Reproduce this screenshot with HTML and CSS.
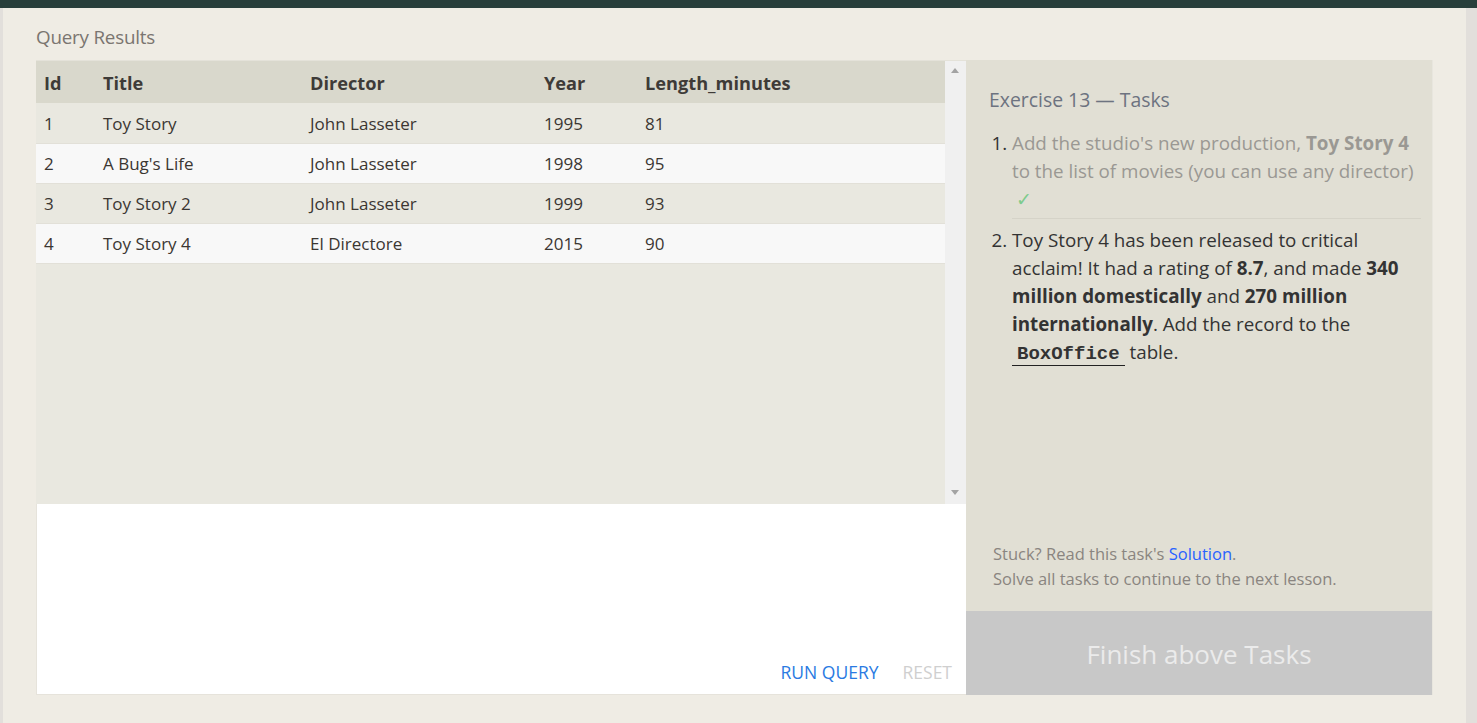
FILE: index.html
```html
<!DOCTYPE html>
<html>
<head>
<meta charset="utf-8">
<link rel="stylesheet" href="styles.css">
</head>
<body>
<div class="topbar"></div>
<div class="frame">
  <div class="main">
    <div class="section-title">Query Results</div>
    <div class="workspace">
      <div class="left">
        <div class="results">
          <div class="table-wrap">
            <table class="data">
              <colgroup>
                <col class="c-id"><col class="c-title"><col class="c-dir"><col class="c-year"><col>
              </colgroup>
              <thead>
                <tr><th>Id</th><th>Title</th><th>Director</th><th>Year</th><th>Length_minutes</th></tr>
              </thead>
              <tbody>
                <tr><td>1</td><td>Toy Story</td><td>John Lasseter</td><td>1995</td><td>81</td></tr>
                <tr><td>2</td><td>A Bug's Life</td><td>John Lasseter</td><td>1998</td><td>95</td></tr>
                <tr><td>3</td><td>Toy Story 2</td><td>John Lasseter</td><td>1999</td><td>93</td></tr>
                <tr><td>4</td><td>Toy Story 4</td><td>El Directore</td><td>2015</td><td>90</td></tr>
              </tbody>
            </table>
          </div>
          <div class="scrollbar">
            <span class="arrow up"></span>
            <span class="arrow down"></span>
          </div>
        </div>
        <div class="editor">
          <div class="actions">
            <span class="run">RUN QUERY</span>
            <span class="reset">RESET</span>
          </div>
        </div>
      </div>
      <div class="right">
        <div class="tasks">
          <div class="tasks-title">Exercise 13 — Tasks</div>
          <ol class="task-list">
            <li class="done"><span class="t">Add the studio's new production, <b>Toy Story 4</b> to the list of movies (you can use any director)</span> <span class="check">✓</span></li>
            <li>Toy Story 4 has been released to critical acclaim! It had a rating of <b>8.7</b>, and made <b>340 million domestically</b> and <b>270 million internationally</b>. Add the record to the <code>BoxOffice</code> table.</li>
          </ol>
          <div class="hint">
            <div>Stuck? Read this task's <a class="link">Solution</a>.</div>
            <div>Solve all tasks to continue to the next lesson.</div>
          </div>
        </div>
        <div class="finish">Finish above Tasks</div>
      </div>
    </div>
  </div>
</div>
</body>
</html>
```
FILE: styles.css
```css
html, body {
  margin: 0;
  padding: 0;
}
body {
  background: #e2dfdb;
  font-family: "Open Sans", "Noto Sans", sans-serif;
  width: 1477px;
  height: 723px;
  overflow: hidden;
}
.topbar {
  height: 8px;
  background: #283f3b;
}
.frame {
  padding: 0 11px 0 3px;
  height: 715px;
}
.main {
  background: #efece4;
  height: 715px;
  padding: 0 33px;
  box-sizing: border-box;
}
.section-title {
  padding-top: 17px;
  height: 35px;
  font-size: 18.8px;
  line-height: 24px;
  color: #7a7570;
  letter-spacing: -0.2px;
}
.workspace {
  display: flex;
  height: 635px;
}
.left {
  width: 930px;
  display: flex;
  flex-direction: column;
}
.results {
  height: 444px;
  display: flex;
  background: #e9e8e0;
  border-top: 1px solid #e4e2d9;
  box-sizing: border-box;
}
.table-wrap {
  flex: 1;
}
.data {
  width: 100%;
  border-collapse: collapse;
  font-size: 17px;
  color: #3b3632;
}
.c-id { width: 59px; }
.c-title { width: 207px; }
.c-dir { width: 234px; }
.c-year { width: 101px; }
.data th {
  background: #d9d8cc;
  height: 42px;
  box-sizing: border-box;
  text-align: left;
  padding: 2px 8px 0;
  font-weight: 700;
  font-size: 18.2px;
  color: #3e3b38;
}
.data td {
  height: 40px;
  box-sizing: border-box;
  padding: 1px 8px 0;
  border-bottom: 1px solid #e2e0d8;
}
.data tbody tr:nth-child(odd) td { background: #e9e8e0; }
.data tbody tr:nth-child(even) td { background: #f8f8f8; }
.scrollbar {
  width: 21px;
  background: #f0f0f0;
  position: relative;
}
.arrow {
  position: absolute;
  left: 6px;
  width: 0;
  height: 0;
  border-left: 4px solid transparent;
  border-right: 4px solid transparent;
}
.arrow.up {
  top: 7px;
  border-bottom: 5px solid #a3a3a3;
}
.arrow.down {
  bottom: 9px;
  border-top: 5px solid #a3a3a3;
}
.editor {
  flex: 1;
  background: #ffffff;
  border-left: 1px solid #e6e3db;
  border-bottom: 1px solid #e6e3db;
  display: flex;
  align-items: flex-end;
  justify-content: flex-end;
}
.actions {
  display: flex;
  gap: 24px;
  padding: 0 14px 10px 0;
  font-size: 17.5px;
  line-height: 24px;
}
.run { color: #2a7ae2; }
.reset { color: #cfcfcf; }
.right {
  width: 466px;
  display: flex;
  flex-direction: column;
  border-right: 1px solid #e8e6de;
}
.tasks {
  flex: 1;
  background: #e1dfd4;
  padding: 27px 11px 0 23px;
  display: flex;
  flex-direction: column;
}
.tasks-title {
  font-size: 19.4px;
  line-height: 26px;
  color: #6d7380;
}
.task-list {
  margin: 16px 0 0 0;
  padding: 0 0 0 23px;
  font-size: 18.8px;
  line-height: 28px;
  color: #333;
}
.task-list li.done {
  border-bottom: 1px solid #d5d3c8;
  padding-bottom: 5px;
  margin-bottom: 7px;
}
.task-list li.done .t { color: #9a9893; }
.check {
  color: #7ecb8c;
  display: inline-block;
  margin-left: 4px;
}
code {
  font-family: "Liberation Mono", "DejaVu Sans Mono", monospace;
  font-weight: 700;
  font-size: 19px;
  padding: 0 5px;
  border-bottom: 1px solid #222;
  color: #333;
}
.hint {
  margin-top: auto;
  padding: 0 0 20px 4px;
  font-size: 16.5px;
  line-height: 25px;
  color: #8a8580;
}
.link { color: #2962ff; }
.finish {
  height: 84px;
  background: #c8c8c8;
  color: #ebebeb;
  font-size: 26px;
  display: flex;
  align-items: center;
  justify-content: center;
  padding-top: 2px;
  box-sizing: border-box;
}
```
